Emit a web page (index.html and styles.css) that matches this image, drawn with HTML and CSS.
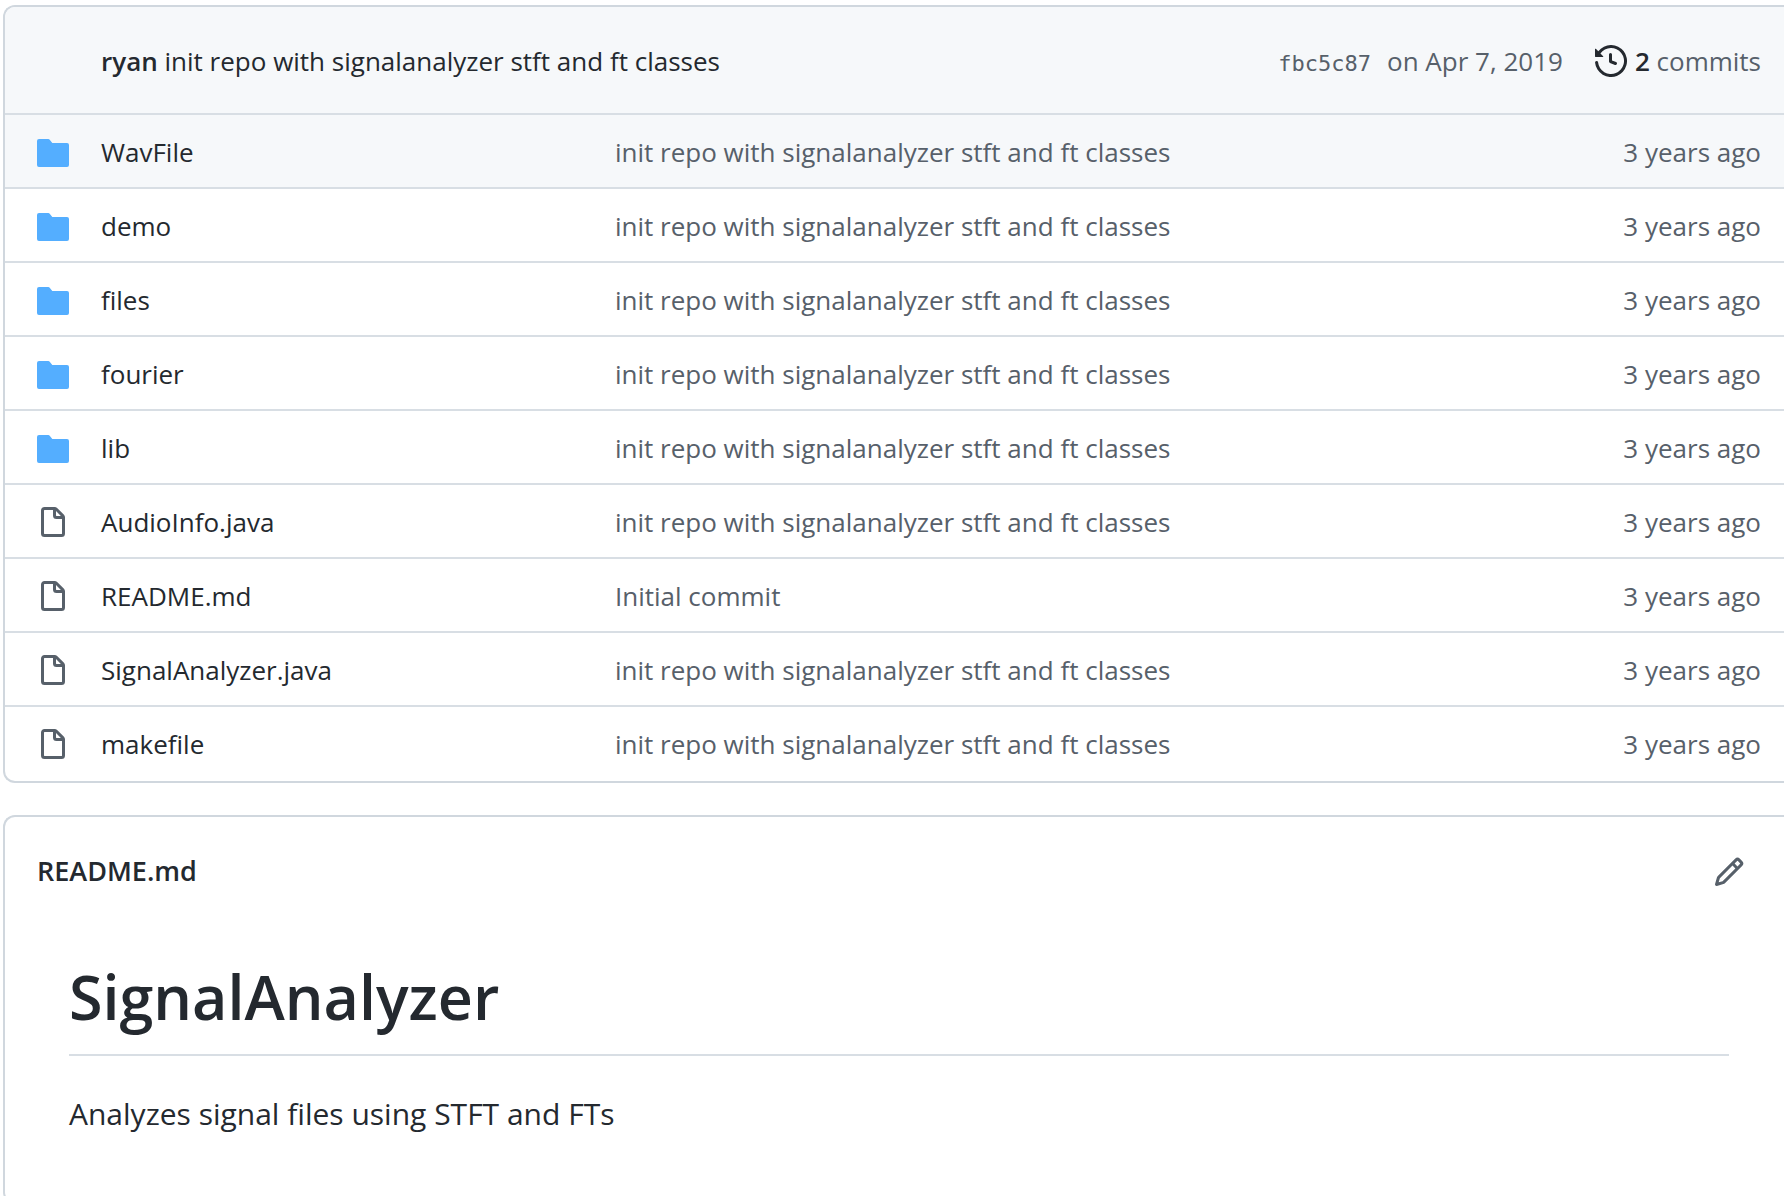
FILE: index.html
```html
<!DOCTYPE html>
<html lang="en">
<head>
<meta charset="utf-8">
<title>SignalAnalyzer</title>
<link rel="stylesheet" href="styles.css">
</head>
<body>
<svg class="sprite" aria-hidden="true">
  <symbol id="folder" viewBox="0 0 16 16"><path d="M1 1A1 1 0 000 2v12A1 1 0 001 15h14a1 1 0 001-1V4A1 1 0 0015 3H7.750a.25.25 0 01-.2-.1l-.9-1.200C6.320 1.260 5.800 1 5.250 1z"/></symbol>
  <symbol id="file" viewBox="0 0 16 16"><path fill-rule="evenodd" d="M3.75 1.5a.25.25 0 00-.25.25v11.5c0 .138.112.25.25.25h8.5a.25.25 0 00.25-.25V6H9.75A1.75 1.75 0 018 4.250V1.5H3.750zm5.750.560v2.190c0 .138.112.25.25.25h2.190L9.5 2.060zM2 1.750C2 .784 2.784 0 3.750 0h5.086c.464 0 .909.184 1.237.513l3.414 3.414c.329.328.513.773.513 1.237v8.086A1.750 1.750 0 0112.250 15h-8.500A1.750 1.750 0 012 13.250V1.750z"/></symbol>
</svg>
<main class="page">
  <section class="box" aria-label="Files">
    <header class="commit">
      <p class="commit-message"><a class="author" href="#">ryan</a> <a href="#">init repo with signalanalyzer stft and ft classes</a></p>
      <p class="revision muted"><a class="hash" href="#">fbc5c87</a> <a href="#">on Apr 7, 2019</a></p>
      <a class="history" href="#">
        <svg class="icon" viewBox="0 0 16 16" aria-hidden="true"><path fill-rule="evenodd" d="M1.643 3.143L.427 1.927A.25.25 0 000 2.104V5.750c0 .138.112.25.25.25h3.646a.25.25 0 00.177-.427L2.715 4.215a6.5 6.5 0 11-1.180 4.458.75.75 0 10-1.493.154 8.001 8.001 0 101.6-5.684zM7.750 4a.75.75 0 01.75.75v2.992l2.028.812a.75.75 0 01-.557 1.392l-2.500-1A.75.75 0 017 8.250v-3.500A.75.75 0 017.750 4z"/></svg>
        <span><strong>2</strong> <span class="muted">commits</span></span>
      </a>
    </header>
    <table class="files">
      <colgroup><col class="col-icon"><col class="col-name"><col><col class="col-age"></colgroup>
      <tbody>
        <tr class="active"><td><svg class="icon folder" aria-hidden="true"><use href="#folder"/></svg></td><td><a href="#">WavFile</a></td><td><a class="muted" href="#">init repo with signalanalyzer stft and ft classes</a></td><td class="age">3 years ago</td></tr>
        <tr><td><svg class="icon folder" aria-hidden="true"><use href="#folder"/></svg></td><td><a href="#">demo</a></td><td><a class="muted" href="#">init repo with signalanalyzer stft and ft classes</a></td><td class="age">3 years ago</td></tr>
        <tr><td><svg class="icon folder" aria-hidden="true"><use href="#folder"/></svg></td><td><a href="#">files</a></td><td><a class="muted" href="#">init repo with signalanalyzer stft and ft classes</a></td><td class="age">3 years ago</td></tr>
        <tr><td><svg class="icon folder" aria-hidden="true"><use href="#folder"/></svg></td><td><a href="#">fourier</a></td><td><a class="muted" href="#">init repo with signalanalyzer stft and ft classes</a></td><td class="age">3 years ago</td></tr>
        <tr><td><svg class="icon folder" aria-hidden="true"><use href="#folder"/></svg></td><td><a href="#">lib</a></td><td><a class="muted" href="#">init repo with signalanalyzer stft and ft classes</a></td><td class="age">3 years ago</td></tr>
        <tr><td><svg class="icon file" aria-hidden="true"><use href="#file"/></svg></td><td><a href="#">AudioInfo.java</a></td><td><a class="muted" href="#">init repo with signalanalyzer stft and ft classes</a></td><td class="age">3 years ago</td></tr>
        <tr><td><svg class="icon file" aria-hidden="true"><use href="#file"/></svg></td><td><a href="#">README.md</a></td><td><a class="muted" href="#">Initial commit</a></td><td class="age">3 years ago</td></tr>
        <tr><td><svg class="icon file" aria-hidden="true"><use href="#file"/></svg></td><td><a href="#">SignalAnalyzer.java</a></td><td><a class="muted" href="#">init repo with signalanalyzer stft and ft classes</a></td><td class="age">3 years ago</td></tr>
        <tr><td><svg class="icon file" aria-hidden="true"><use href="#file"/></svg></td><td><a href="#">makefile</a></td><td><a class="muted" href="#">init repo with signalanalyzer stft and ft classes</a></td><td class="age">3 years ago</td></tr>
      </tbody>
    </table>
  </section>
  <section class="box">
    <header class="readme-bar">
      <h2 class="readme-name"><a href="#">README.md</a></h2>
      <button class="edit" type="button" aria-label="Edit this file">
        <svg class="icon" viewBox="0 0 16 16" aria-hidden="true"><path fill-rule="evenodd" d="M11.013 1.427a1.750 1.750 0 012.474 0l1.086 1.086a1.750 1.750 0 010 2.474l-8.610 8.610c-.21.21-.47.364-.756.445l-3.251.930a.75.75 0 01-.927-.928l.929-3.250a1.750 1.750 0 01.445-.758l8.610-8.610zm1.414 1.060a.25.25 0 00-.354 0L10.811 3.750l1.439 1.440 1.263-1.263a.25.25 0 000-.354l-1.086-1.086zM11.189 6.250L9.750 4.810l-6.286 6.287a.25.25 0 00-.064.108l-.558 1.953 1.953-.558a.249.249 0 00.108-.064l6.286-6.286z"/></svg>
      </button>
    </header>
    <article class="readme">
      <h1>SignalAnalyzer</h1>
      <p>Analyzes signal files using STFT and FTs</p>
    </article>
  </section>
</main>
</body>
</html>
```
FILE: styles.css
```css
* {
  box-sizing: border-box;
}

body {
  margin: 0;
  background: #fff;
  color: #24292f;
  font-family: "Open Sans", "Noto Sans", sans-serif;
  font-size: 26px;
  line-height: 40px;
}

a {
  color: inherit;
  text-decoration: none;
}

h1,
h2,
p {
  margin: 0;
}

.sprite {
  display: none;
}

.page {
  display: flex;
  flex-direction: column;
  gap: 32px;
  height: 100vh;
  padding: 5px 0 0 3px;
  overflow: hidden;
}

.box {
  flex: none;
  border: 2px solid #d0d7de;
  border-right: 0;
  border-radius: 12px 0 0 12px;
  overflow: hidden;
}

.icon {
  display: block;
  flex: none;
  width: 32px;
  height: 32px;
  fill: currentColor;
}

.muted {
  color: #57606a;
}

.commit {
  display: flex;
  align-items: center;
  gap: 32px;
  padding: 34px 23px 32px 96px;
  background: #f6f8fa;
}

.commit-message {
  flex: 1;
}

.author,
.history strong {
  font-weight: 600;
}

.revision {
  display: flex;
  align-items: baseline;
  gap: 16px;
}

.hash {
  font-family: "DejaVu Sans Mono", monospace;
  font-size: 22px;
  line-height: 24px;
}

.history {
  display: flex;
  align-items: center;
  gap: 8px;
}

.files {
  width: 100%;
  padding-bottom: 2px;
  table-layout: fixed;
  border-collapse: separate;
  border-spacing: 0;
}

.col-icon {
  width: 96px;
}

.col-name {
  width: 514px;
}

.col-age {
  width: 200px;
}

.files td {
  padding: 17px 0 15px;
  border-top: 2px solid #d8dee4;
}

.files td:first-child {
  padding: 19px 0 15px 32px;
}

.files .age {
  padding-right: 23px;
  color: #57606a;
  text-align: right;
}

.active {
  background: #f6f8fa;
}

.folder {
  color: #54aeff;
}

.file {
  color: #57606a;
}

.readme-bar {
  display: flex;
  align-items: center;
  justify-content: space-between;
  padding: 34px 39px 32px 32px;
}

.readme-name {
  font-size: 27px;
  font-weight: 600;
}

.edit {
  padding: 2px 0 0;
  border: 0;
  background: none;
  color: #57606a;
}

.readme {
  padding: 34px 55px 64px 64px;
}

.readme h1 {
  margin-bottom: 34px;
  padding-bottom: 17px;
  border-bottom: 2px solid #d8dee4;
  font-size: 61px;
  font-weight: 600;
  line-height: 80px;
}

.readme p {
  font-size: 30px;
  line-height: 48px;
}
```
